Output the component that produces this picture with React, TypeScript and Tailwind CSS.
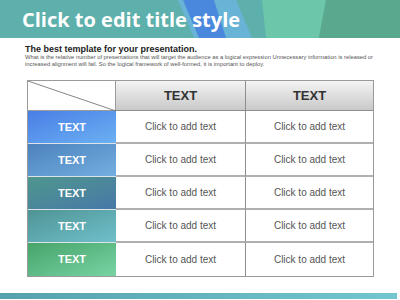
import React from 'react';

const rowHeads = [
  'bg-gradient-to-br from-[#4a7ee6] to-[#6cb0f2]',
  'bg-gradient-to-br from-[#4c82bd] to-[#74aee0]',
  'bg-gradient-to-br from-[#4f968c] to-[#4878a8]',
  'bg-gradient-to-br from-[#4f9494] to-[#6fc0cc]',
  'bg-gradient-to-br from-[#46a46a] to-[#78d4a4]',
];

export default function App() {
  return (
    <div className="w-[400px] h-[300px] bg-white overflow-hidden flex flex-col font-['Liberation_Sans',Arial,sans-serif]">
      {/* Title band */}
      <header className="relative h-[38px] bg-[#5db0ab] shrink-0">
        <svg className="absolute inset-0" width="400" height="38" viewBox="0 0 400 38">
          <polygon points="178,0 236,0 252,38 194,38" fill="#68b4d6" />
          <polygon points="183,0 214,0 226,38 199,38" fill="#4a88de" />
          <polygon points="262,0 326,0 319,38 266,38" fill="#6cc6a9" />
          <polygon points="326,0 400,0 400,38 319,38" fill="#5aa98f" />
        </svg>
        <h1 className="relative pl-[22px] pt-[7px] text-[20px] leading-[25px] font-bold text-white font-['Open_Sans',sans-serif]">
          Click to edit title style
        </h1>
      </header>

      {/* Intro */}
      <div className="pl-[25px] pr-[18px] pt-[6px] text-[#333]">
        <p className="text-[9px] leading-[10px] font-bold text-[#222]">The best template for your presentation.</p>
        <p className="text-[5.8px] leading-[7px] text-[#555]">
          What is the relative number of presentations that will target the audience as a logical expression Unnecessary information is released or increased alignment will fail. So the logical framework of well-formed, it is important to deploy.
        </p>
      </div>

      {/* Table */}
      <div className="ml-[27px] mt-[12px] w-[347px] border border-[#9a9a9a] grid grid-cols-[88px_130px_1fr]">
        <div className="relative h-[30px] bg-white border-r border-b border-[#9a9a9a]">
          <svg className="absolute inset-0" width="88" height="30" viewBox="0 0 88 30">
            <line x1="0" y1="0" x2="88" y2="30" stroke="#666" strokeWidth="0.8" />
          </svg>
        </div>
        <div className="h-[30px] bg-gradient-to-b from-[#f4f4f4] to-[#c9c9c9] border-r border-b border-[#8e8e8e] flex items-center justify-center text-[13px] font-bold text-[#333]">
          TEXT
        </div>
        <div className="h-[30px] bg-gradient-to-b from-[#f4f4f4] to-[#c9c9c9] border-b border-[#8e8e8e] flex items-center justify-center text-[13px] font-bold text-[#333]">
          TEXT
        </div>
        {rowHeads.map((cls, i) => (
          <React.Fragment key={i}>
            <div className={`h-[33px] ${cls} flex items-center justify-center text-[11px] font-bold text-white ${i < 4 ? 'border-b border-[#dde4e8]' : ''}`}>
              TEXT
            </div>
            <div className={`h-[33px] border-r border-[#8e8e8e] flex items-center justify-center text-[10px] text-[#555] ${i < 4 ? 'border-b-2 border-b-[#b0b0b0]' : ''}`}>
              Click to add text
            </div>
            <div className={`h-[33px] flex items-center justify-center text-[10px] text-[#555] ${i < 4 ? 'border-b-2 border-b-[#b0b0b0]' : ''}`}>
              Click to add text
            </div>
          </React.Fragment>
        ))}
      </div>

      {/* Bottom bar */}
      <div className="mt-auto mb-[1px] h-[6px] w-[397px] bg-gradient-to-r from-[#55a2ad] to-[#72c6d0]" />
    </div>
  );
}
